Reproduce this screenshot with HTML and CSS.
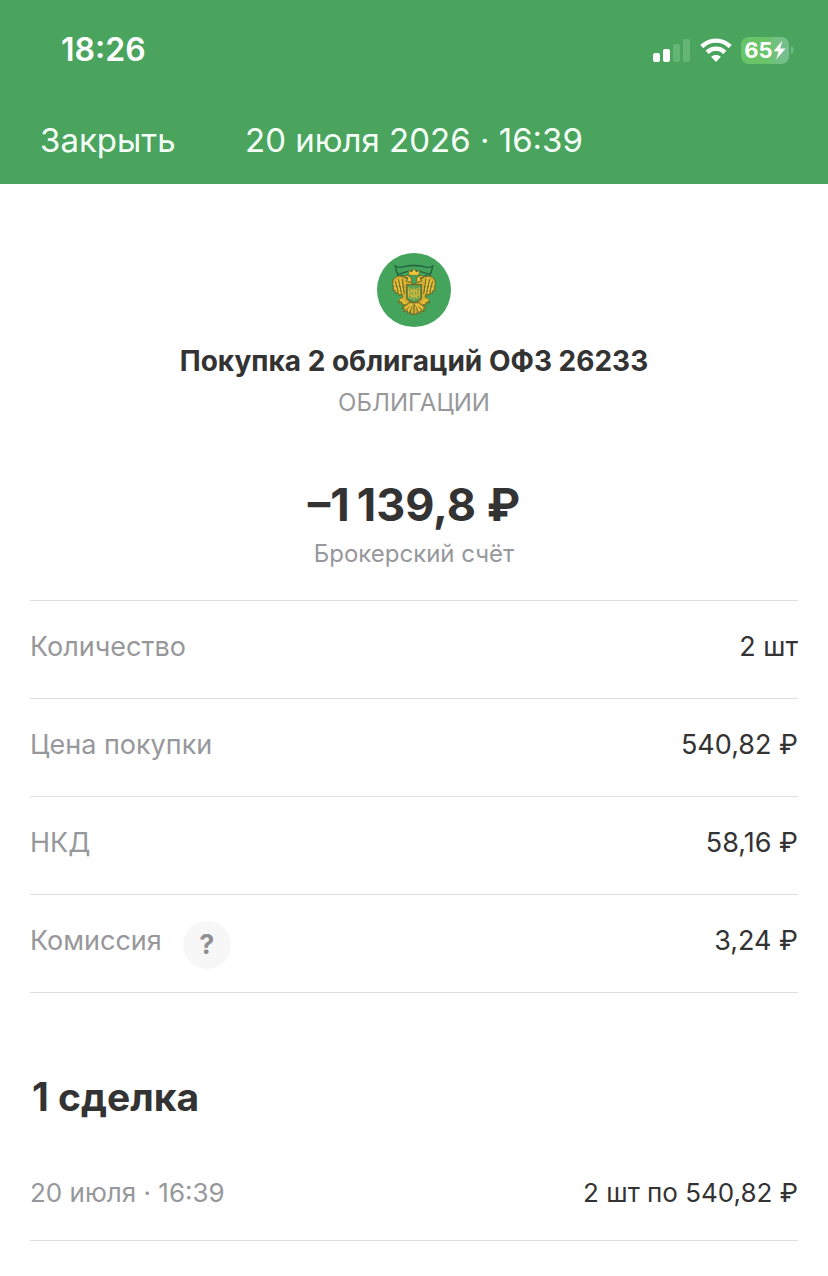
FILE: index.html
```html
<!DOCTYPE html>
<html lang="ru">
<head>
<meta charset="utf-8">
<meta name="viewport" content="width=device-width, initial-scale=1">
<title>Покупка 2 облигаций ОФЗ 26233</title>
<link rel="stylesheet" href="styles.css">
</head>
<body>
<header class="header">
  <div class="status">
    <time class="clock">18:26</time>
    <div class="indicators">
      <svg class="signal" width="38" height="24" viewBox="0 0 38 24" aria-hidden="true">
        <rect x="0" y="15" width="7" height="9" rx="2" fill="#fff"/>
        <rect x="10" y="11" width="7" height="13" rx="2" fill="#fff"/>
        <rect x="20" y="6" width="7" height="18" rx="2" fill="#64b576"/>
        <rect x="30" y="1" width="7" height="23" rx="2" fill="#64b576"/>
      </svg>
      <svg class="wifi" width="32" height="24" viewBox="0 0 32 24" aria-hidden="true">
        <g fill="none" stroke="#fff" stroke-width="4.4">
          <path d="M1.800 8.600C9.600.600 22.400.600 30.200 8.600"/>
          <path d="M7.100 14.400C12 9.400 20 9.400 24.900 14.400"/>
        </g>
        <path d="M16 24l-4.900-5.200c2.700-2.500 7.100-2.500 9.800 0z" fill="#fff"/>
      </svg>
      <div class="battery"><span>65</span><svg width="13" height="20" viewBox="0 0 13 20" aria-hidden="true"><path d="M9.400.500L.600 11.200h5L3.200 19.500 12.500 8.400H7.100z" fill="#fff"/></svg></div>
      <svg class="cap" width="3" height="8" viewBox="0 0 3 8" aria-hidden="true"><path d="M0 0c4 1.500 4 6.500 0 8z" fill="#6bba82"/></svg>
    </div>
  </div>
  <nav class="nav">
    <button class="close" type="button">Закрыть</button>
    <span class="date">20 июля 2026 · 16:39</span>
  </nav>
</header>
<main class="page">
  <section class="summary">
    <svg class="emblem" width="74" height="74" viewBox="0 0 222 222" role="img" aria-label="Минфин России">
      <circle cx="111" cy="111" r="111" fill="#45a45c"/>
      <path d="M55 39q10 7 27 2 29-7 58 0 17 5 27-2l-4 19q-7 9-17 2-35-13-70 0-10 7-17-2z" fill="#45a45c" stroke="#225f3f" stroke-width="4"/>
      <path d="M62 59q-3 10 4 17l14-8M160 59q3 10-4 17l-14-8" fill="#347f48" stroke="#225f3f" stroke-width="3"/>
      <g fill="#d4ae32" stroke="#6a6527" stroke-width="3">
        <path d="M97 86C80 61 53 67 47 84l1 10 1 9-1 10 8-1-1 9 7-2 4 8 8-4 4 8-9 7-5 12 9-3 3 10 10-3 6 10 19 7 19-7 6-10 10 3 3-10 9 3-5-12-9-7 4-8 8 4 4-8 7 2-1-9 8 1-1-10 1-9 1-10c-6-17-33-23-50 2l-14 8z"/>
        <path d="M97 149l-23 16 10 1-4 10 12-3v9l9-4 3 8 7-5 7 5 3-8 9 4v-9l12 3-4-10 10-1-23-16z"/>
      </g>
      <g fill="none" stroke="#65682e" stroke-width="3">
        <path d="M55 85l10 32M64 79l10 42M75 77l7 46M167 85l-10 32M158 79l-10 42M147 77l-7 46"/>
        <path d="M51 100l31 2M55 113l27 2M171 100l-31 2M167 113l-27 2"/>
        <path d="M111 152v34M104 152l-18 20M118 152l18 20M107 153l-9 27M115 153l9 27"/>
      </g>
      <g fill="none" stroke="#efc53a" stroke-width="4" stroke-linecap="round">
        <path d="M51 91l7 24M60 82l8 37M70 78l7 42M171 91l-7 24M162 82l-8 37M152 78l-7 42"/>
        <path d="M84 167l19-14M94 173l12-19M138 167l-19-14M128 173l-12-19M69 139l11 5 5 9M153 139l-11 5-5 9"/>
      </g>
      <path d="M97 67l-3-15 10 5 7-10 7 10 10-5-3 15z" fill="#f1c940" stroke="#6a6527" stroke-width="2"/>
      <path d="M104 86l-1-10q-12-14-22-5l12 4-5 9 14 4M118 86l1-10q12-14 22-5l-12 4 5 9-14 4" fill="#edc540" stroke="#6a6527" stroke-width="3"/>
      <path d="M89 95h44v40q-3 9-22 14-19-5-22-14z" fill="#57a255" stroke="#706b29" stroke-width="4"/>
      <g fill="none" stroke="#e2ba38" stroke-width="3">
        <path d="M95 103v31M127 103v31M98 106l13 7 13-7M98 136l13-7 13 7M103 109v25M119 109v25M111 103v38"/>
        <circle cx="103" cy="121" r="7"/><circle cx="119" cy="121" r="7"/>
      </g>
    </svg>
    <h1 class="title">Покупка 2 облигаций ОФЗ 26233</h1>
    <p class="kind">ОБЛИГАЦИИ</p>
    <p class="amount">–1&#8201;139,8 ₽</p>
    <p class="account">Брокерский счёт</p>
  </section>
  <dl class="details">
    <div class="row"><dt>Количество</dt><dd>2 шт</dd></div>
    <div class="row"><dt>Цена покупки</dt><dd>540,82 ₽</dd></div>
    <div class="row"><dt>НКД</dt><dd>58,16 ₽</dd></div>
    <div class="row"><dt>Комиссия <button class="help" type="button" aria-label="О комиссии">?</button></dt><dd>3,24 ₽</dd></div>
  </dl>
  <section class="deals">
    <h2 class="heading">1 сделка</h2>
    <div class="deal"><time>20 июля · 16:39</time><span class="deal-value">2 шт по 540,82 ₽</span></div>
  </section>
</main>
</body>
</html>
```
FILE: styles.css
```css
* {
  box-sizing: border-box;
}

body {
  margin: 0;
  background: #fff;
  color: #333;
  font-family: Inter, "Noto Sans", sans-serif;
}

h1, h2, p, dl, dd {
  margin: 0;
}

button {
  border: 0;
  padding: 0;
  background: none;
  color: inherit;
  font: inherit;
}

.header {
  padding: 30px 34px 24px 40px;
  background: #4aa45e;
  color: #fff;
}

.status {
  display: flex;
  justify-content: space-between;
  align-items: center;
  height: 40px;
  padding-left: 21px;
}

.clock {
  font-size: 32px;
  line-height: 40px;
  font-weight: 600;
}

.indicators {
  display: flex;
  align-items: center;
}

.wifi {
  margin: 0 9px;
}

.battery {
  display: flex;
  align-items: center;
  justify-content: center;
  width: 48px;
  height: 27px;
  border-radius: 8px;
  background: linear-gradient(90deg, #69c467 0 50%, #76bf8c 85%);
  font-size: 22px;
  line-height: 27px;
  font-weight: 700;
}

.cap {
  margin-left: 2px;
}

.nav {
  display: grid;
  grid-template-columns: 1fr auto 1fr;
  align-items: center;
  margin: 50px 6px 0 0;
  height: 40px;
  color: #f4fff7;
  font-size: 33px;
  line-height: 40px;
}

.close {
  justify-self: start;
}

.page {
  padding: 0 30px;
}

.summary {
  display: flex;
  flex-direction: column;
  align-items: center;
  padding: 69px 0 30px;
  text-align: center;
}

.title {
  margin-top: 16px;
  font-size: 28px;
  line-height: 36px;
  font-weight: 700;
}

.kind {
  margin-top: 8px;
  color: #97989b;
  font-size: 24px;
  line-height: 32px;
}

.amount {
  margin-top: 60px;
  font-size: 45px;
  line-height: 52px;
  font-weight: 700;
}

.account {
  margin-top: 7px;
  color: #97989b;
  font-size: 24px;
  line-height: 32px;
}

.details {
  border-top: 1px solid #dfdfe1;
}

.row {
  display: flex;
  justify-content: space-between;
  padding: 28px 0 33px;
  border-bottom: 1px solid #dfdfe1;
  font-size: 27px;
  line-height: 36px;
}

.row dt {
  display: flex;
  gap: 21px;
  color: #97989b;
}

.help {
  width: 48px;
  height: 48px;
  margin: -2px 0 -14px;
  border-radius: 50%;
  background: #f7f7f8;
  color: #8e8f92;
  font-size: 27px;
  font-weight: 700;
}

.heading {
  margin-top: 80px;
  padding-left: 2px;
  font-size: 39px;
  line-height: 48px;
  font-weight: 700;
}

.deal {
  display: flex;
  justify-content: space-between;
  margin-top: 56px;
  padding-bottom: 31px;
  border-bottom: 1px solid #dfdfe1;
  font-size: 26px;
  line-height: 32px;
}

.deal time {
  color: #97989b;
}
```
